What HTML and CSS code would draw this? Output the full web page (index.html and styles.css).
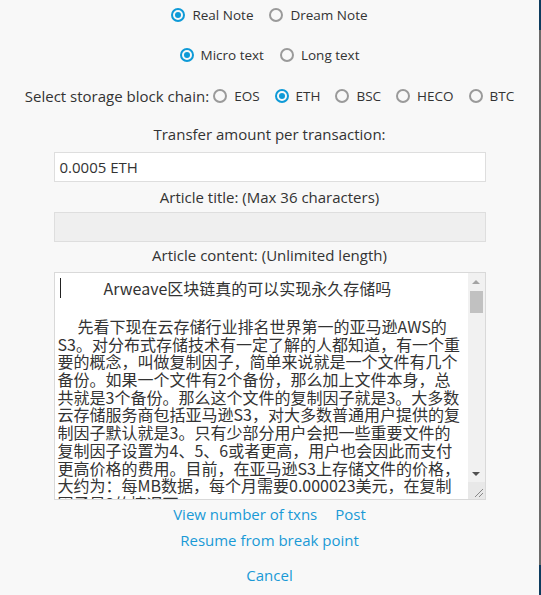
FILE: index.html
```html
<!DOCTYPE html>
<html lang="en">
<head>
<meta charset="utf-8">
<title>Post article</title>
<link rel="stylesheet" href="styles.css">
</head>
<body>
<div class="edge"></div>
<main class="form">
  <div class="row row-type">
    <label class="radio"><span class="dot on"></span>Real Note</label>
    <label class="radio"><span class="dot"></span>Dream Note</label>
  </div>
  <div class="row row-len">
    <label class="radio"><span class="dot on"></span>Micro text</label>
    <label class="radio"><span class="dot"></span>Long text</label>
  </div>
  <div class="row row-chain">
    <span class="chain-label">Select storage block chain:</span>
    <label class="radio"><span class="dot"></span>EOS</label>
    <label class="radio"><span class="dot on"></span>ETH</label>
    <label class="radio"><span class="dot"></span>BSC</label>
    <label class="radio"><span class="dot"></span>HECO</label>
    <label class="radio"><span class="dot"></span>BTC</label>
  </div>
  <div class="caption cap-amount">Transfer amount per transaction:</div>
  <div class="field">0.0005 ETH</div>
  <div class="caption cap-title">Article title: (Max 36 characters)</div>
  <div class="field disabled"></div>
  <div class="caption cap-content">Article content: (Unlimited length)</div>
  <div class="editor">
    <div class="editor-text">
      <div class="ln title"><span class="caret"></span><span class="title-text">Arweave区块链真的可以实现永久存储吗</span></div>
      <div class="ln indent">先看下现在云存储行业排名世界第一的亚马逊AWS的</div>
      <div class="ln">S3。对分布式存储技术有一定了解的人都知道，有一个重</div>
      <div class="ln">要的概念，叫做复制因子，简单来说就是一个文件有几个</div>
      <div class="ln">备份。如果一个文件有2个备份，那么加上文件本身，总</div>
      <div class="ln">共就是3个备份。那么这个文件的复制因子就是3。大多数</div>
      <div class="ln">云存储服务商包括亚马逊S3，对大多数普通用户提供的复</div>
      <div class="ln">制因子默认就是3。只有少部分用户会把一些重要文件的</div>
      <div class="ln">复制因子设置为4、5、6或者更高，用户也会因此而支付</div>
      <div class="ln">更高价格的费用。目前，在亚马逊S3上存储文件的价格，</div>
      <div class="ln">大约为：每MB数据，每个月需要0.000023美元，在复制</div>
      <div class="ln">因子是3的情况下</div>
    </div>
    <div class="scrollbar">
      <div class="sb-btn up"><span class="tri-up"></span></div>
      <div class="sb-track"><div class="sb-thumb"></div></div>
      <div class="sb-btn down"><span class="tri-down"></span></div>
      <div class="sb-corner">
        <svg width="17" height="17" viewBox="0 0 17 17"><path d="M7 15 L15 7 M11 15 L15 11" stroke="#888" stroke-width="1" fill="none"/></svg>
      </div>
    </div>
  </div>
  <div class="links">
    <div class="link-row row-view"><a class="link">View number of txns</a><a class="link">Post</a></div>
    <div class="link-row row-resume"><a class="link">Resume from break point</a></div>
    <div class="link-row row-cancel"><a class="link">Cancel</a></div>
  </div>
</main>
</body>
</html>
```

FILE: styles.css
```css
html, body {
  margin: 0;
  padding: 0;
  background: #f8f8f8;
}
body {
  font-family: "Open Sans", "Noto Sans CJK SC", sans-serif;
  font-size: 15px;
  color: #333;
  position: relative;
  width: 541px;
  height: 595px;
  overflow: hidden;
}
.edge {
  position: absolute;
  top: 0;
  right: 0;
  width: 2px;
  height: 595px;
  background: linear-gradient(to bottom, #0d3b5e 0, #0d3b5e 30px, #6a6a6a 30px, #6a6a6a 565px, #0d3b5e 565px);
}
.form {
  width: 539px;
  display: flex;
  flex-direction: column;
  align-items: center;
  padding-top: 5px;
}
.row {
  display: flex;
  align-items: center;
  justify-content: center;
  height: 20px;
  line-height: 20px;
  gap: 16px;
}
.row-len { margin-top: 20px; }
.row-chain { margin-top: 21px; gap: 15px; }
.chain-label { margin-right: -11px; }
.radio {
  display: flex;
  align-items: center;
  white-space: nowrap;
  font-size: 13.5px;
}
.dot {
  box-sizing: border-box;
  width: 14px;
  height: 14px;
  border-radius: 50%;
  border: 2px solid #9a9a9a;
  margin-right: 7px;
  position: relative;
  flex: none;
}
.dot.on {
  border-color: #0e9ad7;
}
.dot.on::after {
  content: "";
  position: absolute;
  left: 2px;
  top: 2px;
  width: 6px;
  height: 6px;
  border-radius: 50%;
  background: #0e9ad7;
}
.caption {
  height: 20px;
  line-height: 20px;
  text-align: center;
}
.cap-amount { margin-top: 18px; }
.cap-title { margin-top: 5px; }
.cap-content { margin-top: 3px; }
.field {
  box-sizing: border-box;
  width: 432px;
  height: 30px;
  margin-top: 8px;
  background: #fff;
  border: 1px solid #dedede;
  padding: 0 5px;
  line-height: 28px;
}
.field.disabled {
  background: #efefef;
  margin-top: 5px;
}
.editor {
  box-sizing: border-box;
  width: 432px;
  height: 228px;
  margin-top: 7px;
  background: #fff;
  border: 1px solid #d9d9d9;
  display: flex;
}
.editor-text {
  flex: 1;
  overflow: hidden;
  padding: 5px 0 0 3px;
  font-family: "Noto Sans CJK SC", "Open Sans", sans-serif;
  font-size: 16px;
  color: #333;
}
.ln {
  white-space: nowrap;
  height: 17.7px;
  line-height: 17.7px;
}
.ln.title {
  height: 20px;
  line-height: 20px;
  margin-bottom: 20px;
  display: flex;
  align-items: center;
}
.caret {
  width: 1px;
  height: 20px;
  background: #222;
  margin-left: 2px;
  flex: none;
}
.title-text {
  margin-left: 43px;
}
.ln.indent {
  padding-left: 20px;
}
.scrollbar {
  width: 17px;
  flex: none;
  background: #f1f1f1;
  display: flex;
  flex-direction: column;
}
.sb-btn {
  height: 17px;
  display: flex;
  align-items: center;
  justify-content: center;
  flex: none;
}
.sb-btn.up { height: 18px; }
.tri-up {
  width: 0;
  height: 0;
  border-left: 4px solid transparent;
  border-right: 4px solid transparent;
  border-bottom: 4px solid #a3a3a3;
}
.tri-down {
  width: 0;
  height: 0;
  border-left: 4px solid transparent;
  border-right: 4px solid transparent;
  border-top: 4px solid #505050;
}
.sb-track {
  flex: 1;
  padding: 0 2px;
}
.sb-thumb {
  height: 22px;
  background: #c1c1c1;
}
.sb-corner {
  height: 17px;
  flex: none;
  background: #e8e8e8;
}
.sb-corner svg { display: block; }
.links {
  display: flex;
  flex-direction: column;
  align-items: center;
  margin-top: 4px;
}
.link-row {
  display: flex;
  gap: 18px;
  height: 20px;
  line-height: 20px;
}
.row-resume { margin-top: 6px; }
.row-cancel { margin-top: 15px; }
.link {
  color: #1a9ad6;
  cursor: pointer;
}
```
